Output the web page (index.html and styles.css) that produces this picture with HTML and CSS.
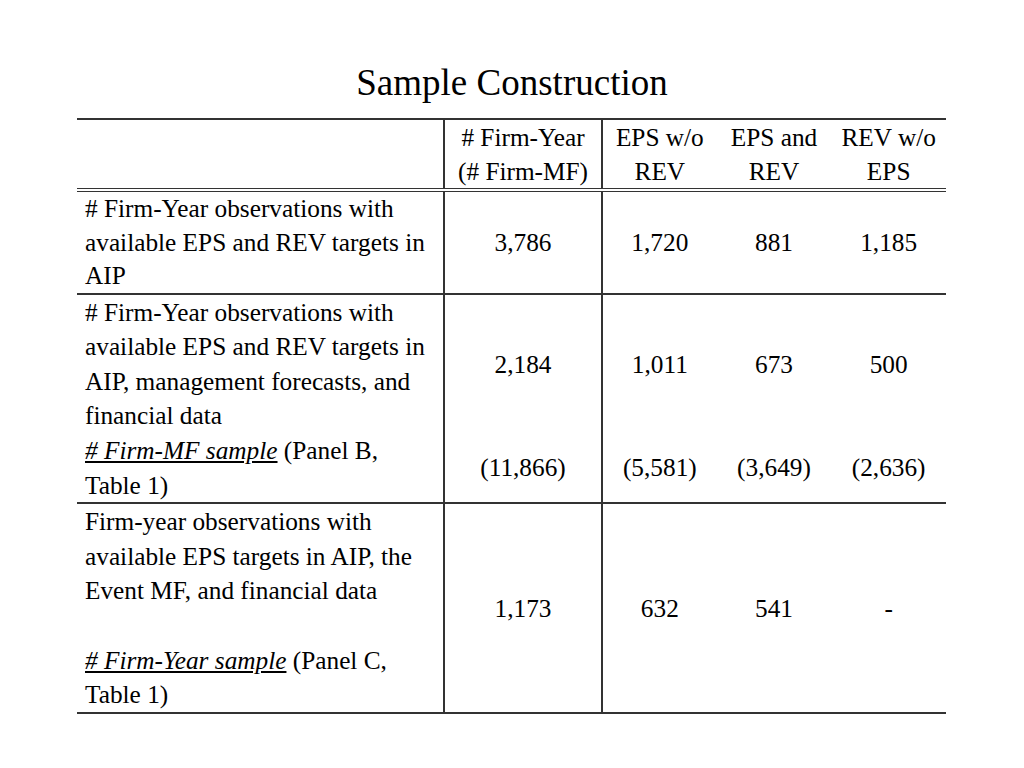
FILE: index.html
```html
<!DOCTYPE html>
<html>
<head>
<meta charset="utf-8">
<link rel="stylesheet" href="styles.css">
</head>
<body>
<div class="slide">
  <h1 class="title">Sample Construction</h1>
  <table class="sample">
    <colgroup>
      <col class="c-label">
      <col class="c-main">
      <col class="c-num">
      <col class="c-num">
      <col class="c-num">
    </colgroup>
    <thead>
      <tr>
        <th class="label sep"></th>
        <th class="sep"># Firm-Year<br>(# Firm-MF)</th>
        <th>EPS w/o<br>REV</th>
        <th>EPS and<br>REV</th>
        <th>REV w/o<br>EPS</th>
      </tr>
    </thead>
    <tbody>
      <tr class="ruled first">
        <td class="label sep"># Firm-Year observations with<br>available EPS and REV targets in<br>AIP</td>
        <td class="sep">3,786</td>
        <td>1,720</td>
        <td>881</td>
        <td>1,185</td>
      </tr>
      <tr class="open">
        <td class="label sep"># Firm-Year observations with<br>available EPS and REV targets in<br>AIP, management forecasts, and<br>financial data</td>
        <td class="sep">2,184</td>
        <td>1,011</td>
        <td>673</td>
        <td>500</td>
      </tr>
      <tr class="ruled">
        <td class="label sep"><span class="sample-name"># Firm-MF sample</span> (Panel B,<br>Table 1)</td>
        <td class="sep">(11,866)</td>
        <td>(5,581)</td>
        <td>(3,649)</td>
        <td>(2,636)</td>
      </tr>
      <tr class="ruled">
        <td class="label sep">Firm-year observations with<br>available EPS targets in AIP, the<br>Event MF, and financial data<br>&nbsp;<br><span class="sample-name"># Firm-Year sample</span> (Panel C,<br>Table 1)</td>
        <td class="sep">1,173</td>
        <td>632</td>
        <td>541</td>
        <td>-</td>
      </tr>
    </tbody>
  </table>
</div>
</body>
</html>
```

FILE: styles.css
```css
html, body {
  margin: 0;
  padding: 0;
  background: #ffffff;
}

body {
  font-family: "Liberation Serif", "Times New Roman", Times, serif;
  color: #000000;
}

.slide {
  width: 1024px;
  height: 768px;
  padding-top: 62px;
  box-sizing: border-box;
}

.title {
  margin: 0;
  font-size: 37px;
  font-weight: normal;
  line-height: 42px;
  text-align: center;
  height: 56px;
}

.sample {
  margin-left: 77px;
  width: 869px;
  border-collapse: collapse;
  table-layout: fixed;
  font-size: 25.3px;
  line-height: 34.6px;
  border-top: 2px solid #333333;
}

.c-label { width: 367px; }
.c-main { width: 158px; }
.c-num { width: 114.67px; }

.sample th,
.sample td {
  padding: 0;
  text-align: center;
  vertical-align: middle;
  font-weight: normal;
  white-space: nowrap;
}

.sample thead th {
  line-height: 34.2px;
  border-bottom: 4px double #333333;
}

.sample .label {
  text-align: left;
  padding-left: 8px;
  vertical-align: top;
}

.sample tr.first td {
  line-height: 33.4px;
}

.sample .sep {
  border-right: 2px solid #333333;
}

.sample tr.ruled td {
  border-bottom: 2px solid #333333;
}

.sample-name {
  font-style: italic;
  text-decoration: underline;
  text-underline-offset: 2px;
}
```
